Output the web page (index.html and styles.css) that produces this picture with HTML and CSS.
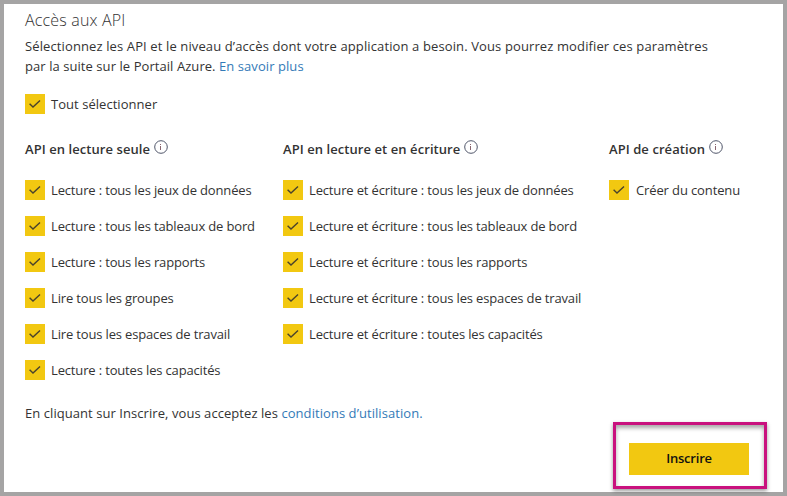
FILE: index.html
```html
<!DOCTYPE html>
<html lang="fr">
<head>
<meta charset="utf-8">
<title>Accès aux API</title>
<link rel="stylesheet" href="styles.css">
</head>
<body>
<svg class="defs" aria-hidden="true">
  <symbol id="check" viewBox="0 0 20 20"><path d="M4.6 9.8 8 13.1 15 6.4" fill="none" stroke="#4a432c" stroke-width="1.4"/></symbol>
  <symbol id="info" viewBox="0 0 14 14"><circle cx="7" cy="7" r="6.3" fill="none" stroke="#50566a" stroke-width="1"/><path d="M6.5 6V10M6.5 4v1" fill="none" stroke="#8a6670" stroke-width="1"/></symbol>
</svg>
<main class="panel">
  <h1 class="title">Accès aux API</h1>
  <p class="intro"><span class="line1">Sélectionnez les API et le niveau d’accès dont votre application a besoin. Vous pourrez modifier ces paramètres</span><br><span class="line2">par la suite sur le Portail Azure. <a class="link">En savoir plus</a></span></p>
  <div class="option all"><svg class="box"><use href="#check"/></svg><span>Tout sélectionner</span></div>
  <div class="columns">
    <section class="column">
      <h2 class="heading">API en lecture seule<svg class="info"><use href="#info"/></svg></h2>
      <div class="option"><svg class="box"><use href="#check"/></svg><span>Lecture : tous les jeux de données</span></div>
      <div class="option"><svg class="box"><use href="#check"/></svg><span>Lecture : tous les tableaux de bord</span></div>
      <div class="option"><svg class="box"><use href="#check"/></svg><span>Lecture : tous les rapports</span></div>
      <div class="option"><svg class="box"><use href="#check"/></svg><span>Lire tous les groupes</span></div>
      <div class="option"><svg class="box"><use href="#check"/></svg><span>Lire tous les espaces de travail</span></div>
      <div class="option"><svg class="box"><use href="#check"/></svg><span>Lecture : toutes les capacités</span></div>
    </section>
    <section class="column">
      <h2 class="heading">API en lecture et en écriture<svg class="info"><use href="#info"/></svg></h2>
      <div class="option"><svg class="box"><use href="#check"/></svg><span>Lecture et écriture : tous les jeux de données</span></div>
      <div class="option"><svg class="box"><use href="#check"/></svg><span>Lecture et écriture : tous les tableaux de bord</span></div>
      <div class="option"><svg class="box"><use href="#check"/></svg><span>Lecture et écriture : tous les rapports</span></div>
      <div class="option"><svg class="box"><use href="#check"/></svg><span>Lecture et écriture : tous les espaces de travail</span></div>
      <div class="option"><svg class="box"><use href="#check"/></svg><span>Lecture et écriture : toutes les capacités</span></div>
    </section>
    <section class="column creation">
      <h2 class="heading">API de création<svg class="info"><use href="#info"/></svg></h2>
      <div class="option"><svg class="box"><use href="#check"/></svg><span>Créer du contenu</span></div>
    </section>
  </div>
  <p class="terms">En cliquant sur Inscrire, vous acceptez les <a class="link">conditions d’utilisation.</a></p>
  <div class="highlight"><button class="submit">Inscrire</button></div>
</main>
</body>
</html>
```
FILE: styles.css
```css
* { box-sizing: border-box; }
body {
  margin: 0;
  background: #fff;
  color: #333;
  font: 13px/20px "Open Sans", "Noto Sans", sans-serif;
}
h1, h2, p { margin: 0; font-size: inherit; white-space: nowrap; }
.defs { display: none; }
.panel {
  display: flex;
  flex-direction: column;
  width: 787px;
  height: 496px;
  padding: 4px 16px 0 21px;
  border: 4px solid #a5a4a4;
}
.title { font-size: 16px; font-weight: 300; line-height: 24px; letter-spacing: .17px; }
.intro { margin-top: 4px; }
.line1 { letter-spacing: .118px; }
.line2 { letter-spacing: .065px; }
.link { color: #337ab7; }
.option {
  display: flex;
  align-items: center;
  gap: 6px;
  height: 20px;
  margin-bottom: 16px;
  letter-spacing: -.155px;
  white-space: nowrap;
}
.box { flex: none; width: 20px; height: 20px; background: #f2c811; }
.all { margin: 18px 0 0; letter-spacing: .04px; }
.columns {
  display: grid;
  grid-template-columns: 258px 326px 160px;
  height: 289px;
  padding-top: 25px;
}
.creation .option { gap: 7px; letter-spacing: -.12px; }
.heading {
  display: flex;
  gap: 4px;
  height: 41px;
  font-weight: 600;
  letter-spacing: .07px;
}
.info { width: 14px; height: 14px; margin-top: 1px; }
.terms { letter-spacing: .062px; }
.highlight {
  display: flex;
  flex: none;
  align-self: flex-end;
  width: 154px;
  height: 67px;
  margin-top: -1px;
  padding: 18px 13px;
  border: 3px solid #c9117e;
  box-shadow: 0 2px 4px rgba(0,0,0,.4), inset 0 3px 4px rgba(0,0,0,.35);
}
.submit {
  width: 120px;
  height: 32px;
  padding: 0 0 2px;
  border: 0;
  background: #f2c811;
  color: #111;
  font: 600 13px/30px "Open Sans", "Noto Sans", sans-serif;
  letter-spacing: -.2px;
}
```
